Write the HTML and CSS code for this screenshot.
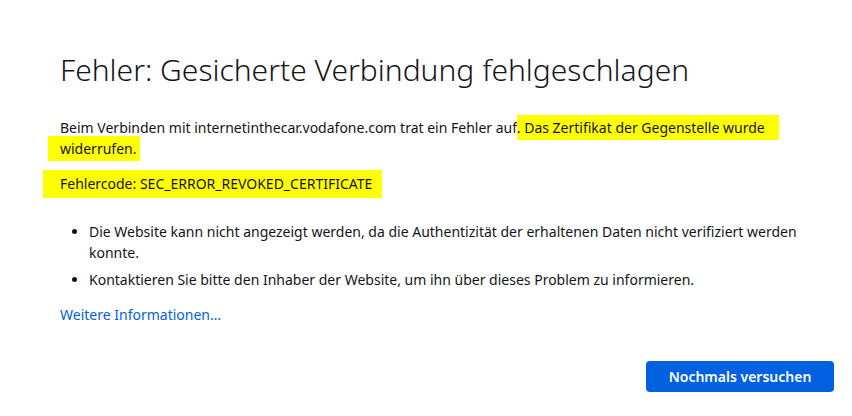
FILE: index.html
```html
<!DOCTYPE html>
<html lang="de">
<head>
<meta charset="utf-8">
<title>Fehler</title>
<link rel="stylesheet" href="styles.css">
</head>
<body>
<main class="page">
  <h1 class="title">Fehler: Gesicherte Verbindung fehlgeschlagen</h1>
  <p class="desc">Beim Verbinden mit internetinthecar.vodafone.com trat ein Fehler auf<span class="hl hl-a">. Das Zertifikat der Gegenstelle wurde</span><br><span class="hl hl-b">widerrufen.</span></p>
  <p class="code"><span class="hl hl-c">Fehlercode: SEC_ERROR_REVOKED_CERTIFICATE</span></p>
  <ul class="list">
    <li>Die Website kann nicht angezeigt werden, da die Authentizität der erhaltenen Daten nicht verifiziert werden konnte.</li>
    <li>Kontaktieren Sie bitte den Inhaber der Website, um ihn über dieses Problem zu informieren.</li>
  </ul>
  <a class="more" href="#">Weitere Informationen…</a>
  <div class="actions">
    <button class="retry">Nochmals versuchen</button>
  </div>
</main>
</body>
</html>
```

FILE: styles.css
```css
html, body {
  margin: 0;
  padding: 0;
  background: #ffffff;
}
body {
  font-family: "Noto Sans", "Open Sans", sans-serif;
  color: #15141a;
  font-size: 14px;
}
.page {
  padding: 52px 18px 0 60px;
  display: flex;
  flex-direction: column;
}
.title {
  font-family: "Noto Sans", sans-serif;
  font-weight: 300;
  font-size: 30px;
  line-height: 36px;
  margin: 0 0 29px 0;
  color: #15141a;
}
.desc {
  margin: 0;
  line-height: 21px;
}
.code {
  margin: 14px 0 0 0;
  line-height: 21px;
}
.hl {
  background: #ffff00;
  -webkit-box-decoration-break: clone;
  box-decoration-break: clone;
}
.hl-a { padding: 3px 14px 3px 0; }
.hl-b { padding: 3px 4px 3px 12px; margin-left: -12px; }
.hl-c { padding: 4px 10px 5px 17px; margin-left: -17px; }
.list {
  margin: 27px 0 0 0;
  padding: 0 0 0 29px;
  line-height: 21px;
}
.list li {
  margin-bottom: 6px;
}
.more {
  margin-top: 8px;
  color: #0061e0;
  text-decoration: none;
  line-height: 21px;
  align-self: flex-start;
}
.actions {
  display: flex;
  justify-content: flex-end;
  margin-top: 36px;
}
.retry {
  font-family: "Noto Sans", sans-serif;
  font-weight: 600;
  font-size: 14px;
  color: #ffffff;
  background: #0061e0;
  border: none;
  border-radius: 4px;
  width: 188px;
  height: 31px;
}
```
